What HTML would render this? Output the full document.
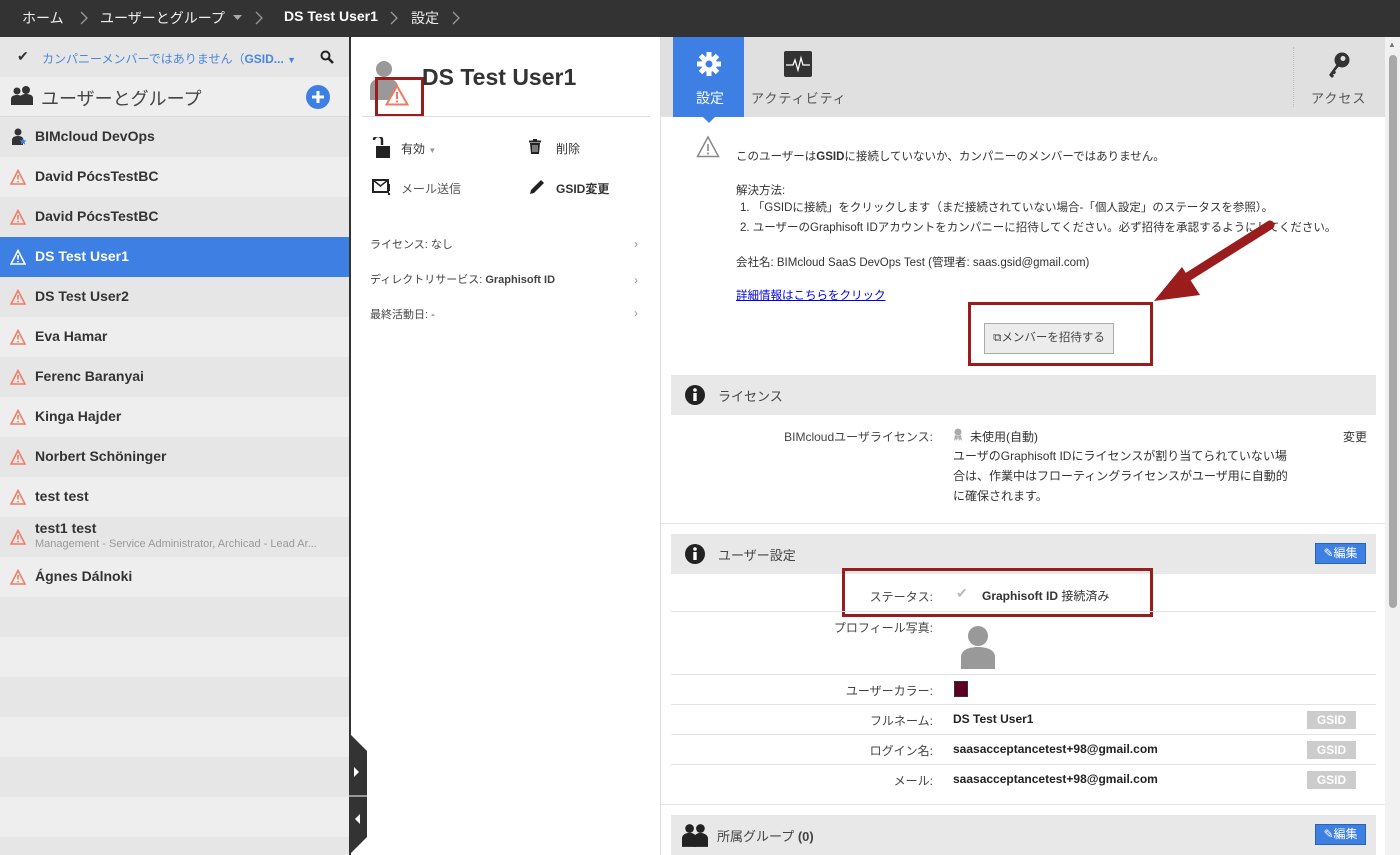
<!DOCTYPE html>
<html style="width:1400px;height:855px;overflow:hidden"><head><meta charset="utf-8"><style>
*{margin:0;padding:0;box-sizing:border-box}
body{width:1400px;height:855px;overflow:hidden;font-family:"Liberation Sans","Noto Sans CJK JP",sans-serif;color:#333;background:#fff;position:relative;font-size:13px}
.a{position:absolute}
.top{left:0;top:0;width:1400px;height:37px;background:#333;color:#eee;font-size:14px}
.top span{position:absolute;top:8px;white-space:nowrap}
.top svg{position:absolute;top:11px}
.row{position:absolute;left:0;width:349px;height:40px;font-weight:bold;font-size:14px;color:#333}
.row .t{position:absolute;left:35px;top:11px}
.row svg{position:absolute;left:10px;top:12px}
.lbl{position:absolute;font-size:12px;color:#444;text-align:right;width:260px;left:673px}
.val{position:absolute;font-size:12px;left:953px;color:#222}
.hr{position:absolute;left:671px;width:705px;height:1px;background:#e3e3e3}
.sec{position:absolute;left:671px;width:705px;height:40px;background:#e8e8e8}
.gs{position:absolute;left:1307px;width:49px;height:18px;background:#ccc;color:#fff;font-weight:bold;font-size:12px;text-align:center;line-height:18px}
.ed{position:absolute;left:1315px;width:51px;height:21px;background:#3d7fe3;border:1px solid #2a62b8;color:#fff;font-size:12px;line-height:19px;text-align:center}
.red{position:absolute;border:3px solid #9b1c1c}
</style></head><body>
<div class="a top">
<span style="left:22px">ホーム</span><svg style="left:80px" width="8" height="14"><path d="M1 1l6 6-6 6" fill="none" stroke="#999" stroke-width="1.3"/></svg>
<span style="left:100px">ユーザーとグループ</span><svg style="left:233px;top:15px" width="9" height="5"><path d="M0 0h9L4.5 5z" fill="#aaa"/></svg><svg style="left:255px" width="8" height="14"><path d="M1 1l6 6-6 6" fill="none" stroke="#999" stroke-width="1.3"/></svg>
<span style="left:284px;font-weight:bold;color:#fff">DS Test User1</span><svg style="left:390px" width="8" height="14"><path d="M1 1l6 6-6 6" fill="none" stroke="#999" stroke-width="1.3"/></svg>
<span style="left:411px">設定</span><svg style="left:452px" width="8" height="14"><path d="M1 1l6 6-6 6" fill="none" stroke="#999" stroke-width="1.3"/></svg>
</div>
<!-- left panel -->
<div class="a" style="left:0;top:37px;width:349px;height:40px;background:#e6e6e6"></div>
<div class="a" style="left:17px;top:48px;font-size:14px">✔</div>
<div class="a" style="left:42px;top:50px;font-size:12px;color:#4a86e0;white-space:nowrap">カンパニーメンバーではありません（<b>GSID...</b> <span style="font-size:9px">▼</span></div>
<svg class="a" style="left:320px;top:50px" width="14" height="14" viewBox="0 0 14 14"><circle cx="5.5" cy="5.5" r="4" fill="none" stroke="#222" stroke-width="2"/><path d="M8.5 8.5L13 13" stroke="#222" stroke-width="2.5"/></svg>
<div class="a" style="left:0;top:77px;width:349px;height:40px;background:#eee;border-bottom:1px solid #d8d8d8"></div>
<svg class="a" style="left:10px;top:86px" width="24" height="20" viewBox="0 0 24 20"><circle cx="7" cy="5" r="3.5" fill="#333"/><circle cx="16" cy="4" r="4" fill="#333"/><path d="M1 19v-6c0-3 3-4 6-4s6 1 6 4v6z" fill="#333"/><path d="M10 19v-7c0-3 3-4 6-4s7 1 7 4v7z" fill="#333"/></svg>
<div class="a" style="left:41px;top:85px;font-size:18px;color:#444">ユーザーとグループ</div>
<svg class="a" style="left:306px;top:85px" width="24" height="24"><circle cx="12" cy="12" r="12" fill="#3d7fe3"/><path d="M12 6v12M6 12h12" stroke="#fff" stroke-width="3"/></svg>
<div class="row" style="top:117px;background:#e6e6e6"><svg width="16" height="18" viewBox="0 0 16 18" style="left:11px;top:11px"><circle cx="7" cy="4" r="3.5" fill="#333"/><path d="M1 17v-5c0-3 3-4 6-4s5 1 5 3v6z" fill="#333"/><path d="M12 10l1 2.3 2.4.2-1.8 1.6.6 2.4-2.2-1.3-2.2 1.3.6-2.4-1.8-1.6 2.4-.2z" fill="#3d7fe3"/></svg><span class="t">BIMcloud DevOps</span></div>
<div class="row" style="top:157px;background:#eee"><svg width="16" height="16" viewBox="0 0 16 16"><path d="M8 1.5L15 15H1z" fill="none" stroke="#f07b65" stroke-width="1.6"/><path d="M8 6v4.5M8 12v1.4" stroke="#f07b65" stroke-width="1.6"/></svg><span class="t">David PócsTestBC</span></div>
<div class="row" style="top:197px;background:#e6e6e6"><svg width="16" height="16" viewBox="0 0 16 16"><path d="M8 1.5L15 15H1z" fill="none" stroke="#f07b65" stroke-width="1.6"/><path d="M8 6v4.5M8 12v1.4" stroke="#f07b65" stroke-width="1.6"/></svg><span class="t">David PócsTestBC</span></div>
<div class="row" style="top:237px;background:#3d7fe3;color:#fff"><svg width="16" height="16" viewBox="0 0 16 16"><path d="M8 1.5L15 15H1z" fill="none" stroke="#fff" stroke-width="1.6"/><path d="M8 6v4.5M8 12v1.4" stroke="#fff" stroke-width="1.6"/></svg><span class="t">DS Test User1</span></div>
<div class="row" style="top:277px;background:#e6e6e6"><svg width="16" height="16" viewBox="0 0 16 16"><path d="M8 1.5L15 15H1z" fill="none" stroke="#f07b65" stroke-width="1.6"/><path d="M8 6v4.5M8 12v1.4" stroke="#f07b65" stroke-width="1.6"/></svg><span class="t">DS Test User2</span></div>
<div class="row" style="top:317px;background:#eee"><svg width="16" height="16" viewBox="0 0 16 16"><path d="M8 1.5L15 15H1z" fill="none" stroke="#f07b65" stroke-width="1.6"/><path d="M8 6v4.5M8 12v1.4" stroke="#f07b65" stroke-width="1.6"/></svg><span class="t">Eva Hamar</span></div>
<div class="row" style="top:357px;background:#e6e6e6"><svg width="16" height="16" viewBox="0 0 16 16"><path d="M8 1.5L15 15H1z" fill="none" stroke="#f07b65" stroke-width="1.6"/><path d="M8 6v4.5M8 12v1.4" stroke="#f07b65" stroke-width="1.6"/></svg><span class="t">Ferenc Baranyai</span></div>
<div class="row" style="top:397px;background:#eee"><svg width="16" height="16" viewBox="0 0 16 16"><path d="M8 1.5L15 15H1z" fill="none" stroke="#f07b65" stroke-width="1.6"/><path d="M8 6v4.5M8 12v1.4" stroke="#f07b65" stroke-width="1.6"/></svg><span class="t">Kinga Hajder</span></div>
<div class="row" style="top:437px;background:#e6e6e6"><svg width="16" height="16" viewBox="0 0 16 16"><path d="M8 1.5L15 15H1z" fill="none" stroke="#f07b65" stroke-width="1.6"/><path d="M8 6v4.5M8 12v1.4" stroke="#f07b65" stroke-width="1.6"/></svg><span class="t">Norbert Schöninger</span></div>
<div class="row" style="top:477px;background:#eee"><svg width="16" height="16" viewBox="0 0 16 16"><path d="M8 1.5L15 15H1z" fill="none" stroke="#f07b65" stroke-width="1.6"/><path d="M8 6v4.5M8 12v1.4" stroke="#f07b65" stroke-width="1.6"/></svg><span class="t">test test</span></div>
<div class="row" style="top:517px;background:#e6e6e6"><svg width="16" height="16" viewBox="0 0 16 16"><path d="M8 1.5L15 15H1z" fill="none" stroke="#f07b65" stroke-width="1.6"/><path d="M8 6v4.5M8 12v1.4" stroke="#f07b65" stroke-width="1.6"/></svg><span class="t" style="top:3px">test1 test</span><span class="a" style="left:35px;top:21px;font-size:11px;font-weight:normal;color:#999;white-space:nowrap">Management - Service Administrator, Archicad - Lead Ar...</span></div>
<div class="row" style="top:557px;background:#eee"><svg width="16" height="16" viewBox="0 0 16 16"><path d="M8 1.5L15 15H1z" fill="none" stroke="#f07b65" stroke-width="1.6"/><path d="M8 6v4.5M8 12v1.4" stroke="#f07b65" stroke-width="1.6"/></svg><span class="t">Ágnes Dálnoki</span></div>
<div class="row" style="top:597px;background:#e6e6e6"></div>
<div class="row" style="top:637px;background:#eee"></div>
<div class="row" style="top:677px;background:#e6e6e6"></div>
<div class="row" style="top:717px;background:#eee"></div>
<div class="row" style="top:757px;background:#e6e6e6"></div>
<div class="row" style="top:797px;background:#eee"></div>
<div class="row" style="top:837px;height:18px;background:#e6e6e6"></div>
<div class="a" style="left:349px;top:37px;width:2px;height:818px;background:#333"></div>
<svg class="a" style="left:349px;top:733px" width="19" height="122" viewBox="0 0 19 122"><path d="M0 0L18 18V104L0 122z" fill="#333"/><path d="M0 63H18" stroke="#fff" stroke-width="1"/><path d="M5 34v10l5-5z" fill="#fff"/><path d="M11 81v10l-5-5z" fill="#fff"/></svg>
<!-- middle -->
<svg class="a" style="left:369px;top:60px" width="30" height="40" viewBox="0 0 30 40"><circle cx="15" cy="9" r="8" fill="#999"/><path d="M1 40V27c0-6 6-9 14-9s14 3 14 9v13z" fill="#999"/></svg>
<svg class="a" style="left:385px;top:84px" width="24" height="22" viewBox="0 0 24 22"><path d="M12 2L22.5 20.5H1.5z" fill="#fff" stroke="#f07b65" stroke-width="2"/><path d="M12 8v7M12 16.5v2" stroke="#f07b65" stroke-width="2"/></svg>
<div class="red" style="left:375px;top:77px;width:49px;height:40px;border-width:3px"></div>
<div class="a" style="left:422px;top:64px;font-size:23px;font-weight:bold;color:#333">DS Test User1</div>
<div class="a" style="left:362px;top:116px;width:288px;height:1px;background:#ddd"></div>
<svg class="a" style="left:372px;top:137px" width="20" height="22" viewBox="0 0 20 22"><path d="M2 3a4 4 0 018 0v5" fill="none" stroke="#222" stroke-width="2.4"/><rect x="4" y="9" width="14" height="12" fill="#222"/></svg>
<div class="a" style="left:401px;top:140px;font-size:12px">有効 <span style="font-size:8px;color:#999">▼</span></div>
<svg class="a" style="left:528px;top:139px" width="14" height="16" viewBox="0 0 14 16"><rect x="1" y="1.5" width="12" height="2" fill="#222"/><rect x="5" y="0" width="4" height="2" fill="#222"/><path d="M2 4h10l-1 11H3z" fill="#222"/><path d="M5 6v7M7 6v7M9 6v7" stroke="#fff" stroke-width=".8"/></svg>
<div class="a" style="left:556px;top:140px;font-size:12px">削除</div>
<svg class="a" style="left:372px;top:178px" width="20" height="18" viewBox="0 0 20 18"><rect x="1" y="2" width="15" height="12" fill="none" stroke="#222" stroke-width="2"/><path d="M1 2l7.5 6L16 2" fill="none" stroke="#222" stroke-width="1.5"/><path d="M17 6v7M17 15v2" stroke="#222" stroke-width="2"/></svg>
<div class="a" style="left:401px;top:180px;font-size:12px;color:#555">メール送信</div>
<svg class="a" style="left:528px;top:178px" width="18" height="18" viewBox="0 0 18 18"><path d="M2 16l1-4L13 2l3 3L6 15z" fill="#222"/></svg>
<div class="a" style="left:556px;top:180px;font-size:12px;font-weight:bold">GSID変更</div>
<div class="a" style="left:370px;top:236px;font-size:11px;color:#444">ライセンス: なし</div>
<div class="a" style="left:370px;top:271px;font-size:11px;color:#444">ディレクトリサービス: <b>Graphisoft ID</b></div>
<div class="a" style="left:370px;top:306px;font-size:11px;color:#444">最終活動日: -</div>
<div class="a" style="left:634px;top:237px;color:#999;font-size:12px">›</div>
<div class="a" style="left:634px;top:273px;color:#999;font-size:12px">›</div>
<div class="a" style="left:634px;top:306px;color:#999;font-size:12px">›</div>
<div class="a" style="left:660px;top:37px;width:1px;height:818px;background:#ddd"></div>
<!-- right -->
<div class="a" style="left:661px;top:37px;width:724px;height:80px;background:#e0e0e0"></div>
<div class="a" style="left:673px;top:37px;width:71px;height:80px;background:#3d7fe3"></div>
<svg class="a" style="left:703px;top:117px" width="12" height="6"><path d="M0 0h12L6 6z" fill="#3d7fe3"/></svg>
<svg class="a" style="left:696px;top:51px" width="26" height="26" viewBox="0 0 26 26"><g fill="#fff"><circle cx="13" cy="13" r="8"/><rect x="10.5" y="1" width="5" height="24"/><rect x="1" y="10.5" width="24" height="5"/><rect x="10.5" y="1" width="5" height="24" transform="rotate(45 13 13)"/><rect x="10.5" y="1" width="5" height="24" transform="rotate(-45 13 13)"/></g><circle cx="13" cy="13" r="3.5" fill="#3d7fe3"/></svg>
<div class="a" style="left:696px;top:88px;font-size:14px;color:#fff">設定</div>
<svg class="a" style="left:784px;top:51px" width="28" height="26" viewBox="0 0 28 26"><rect width="28" height="26" rx="2" fill="#333"/><path d="M2 14h7l2-5 3 10 3-12 2 7h7" fill="none" stroke="#fff" stroke-width="1.3"/></svg>
<div class="a" style="left:751px;top:88px;font-size:13px;color:#555;letter-spacing:1px">アクティビティ</div>
<div class="a" style="left:1293px;top:47px;width:1px;height:60px;border-left:1px dotted #bbb"></div>
<svg class="a" style="left:1326px;top:51px" width="26" height="28" viewBox="0 0 26 28"><circle cx="16" cy="9" r="7.5" fill="#333"/><circle cx="17" cy="7.5" r="2.5" fill="#e0e0e0"/><path d="M11 13L3 24l3 3 2-2-1-2 2 0 1-2-1-1 5-6z" fill="#333"/></svg>
<div class="a" style="left:1311px;top:88px;font-size:13px;color:#555;letter-spacing:1px">アクセス</div>
<svg class="a" style="left:696px;top:135px" width="24" height="24" viewBox="0 0 24 24"><path d="M12 2L22.5 21.5H1.5z" fill="none" stroke="#888" stroke-width="1.5"/><path d="M12 9v7M12 17.5v2" stroke="#888" stroke-width="1.6"/></svg>
<div class="a" style="left:736px;top:148px;font-size:11.5px;color:#333;white-space:nowrap">このユーザーは<b>GSID</b>に接続していないか、カンパニーのメンバーではありません。</div>
<div class="a" style="left:736px;top:182px;font-size:11.5px">解決方法:</div>
<div class="a" style="left:740px;top:199px;font-size:11.5px;white-space:nowrap">1. 「GSIDに接続」をクリックします（まだ接続されていない場合-「個人設定」のステータスを参照）。</div>
<div class="a" style="left:740px;top:219px;font-size:11.5px;white-space:nowrap">2. ユーザーのGraphisoft IDアカウントをカンパニーに招待してください。必ず招待を承認するようにしてください。</div>
<div class="a" style="left:736px;top:254px;font-size:11.5px;white-space:nowrap">会社名: BIMcloud SaaS DevOps Test (管理者: saas.gsid@gmail.com)</div>
<div class="a" style="left:736px;top:287px;font-size:11.5px;color:#00e;text-decoration:underline">詳細情報はこちらをクリック</div>
<div class="a" style="left:984px;top:323px;width:130px;height:31px;background:#ececec;border:1px solid #aaa;font-size:11.5px;line-height:29px;text-align:center;color:#444;white-space:nowrap">⧉メンバーを招待する</div>
<div class="red" style="left:968px;top:302px;width:185px;height:64px"></div>
<svg class="a" style="left:1140px;top:215px" width="140" height="95" viewBox="0 0 140 95"><path d="M130 10L38 68" stroke="#9b1c1c" stroke-width="9" stroke-linecap="round"/><path d="M14 86L60 80 42 52z" fill="#9b1c1c"/></svg>
<div class="sec" style="top:375px"></div>
<svg class="a" style="left:684px;top:384px" width="22" height="22"><circle cx="11" cy="11" r="10" fill="#222"/><rect x="9.3" y="9" width="3.4" height="8" fill="#fff"/><circle cx="11" cy="6" r="1.8" fill="#fff"/></svg>
<div class="a" style="left:718px;top:386px;font-size:13px;color:#444">ライセンス</div>
<div class="lbl" style="top:428px">BIMcloudユーザライセンス:</div>
<svg class="a" style="left:953px;top:428px" width="10" height="13" viewBox="0 0 10 13"><circle cx="5" cy="4" r="3.5" fill="#aaa"/><path d="M2 7l-1 6 2-2 1 2 1-5zM8 7l1 6-2-2-1 2-1-5z" fill="#aaa"/></svg>
<div class="a" style="left:970px;top:428px;font-size:12px">未使用(自動)</div>
<div class="a" style="left:1343px;top:428px;font-size:12px">変更</div>
<div class="a" style="left:953px;top:446px;font-size:12px;line-height:20px;width:342px;color:#333">ユーザのGraphisoft IDにライセンスが割り当てられていない場合は、作業中はフローティングライセンスがユーザ用に自動的に確保されます。</div>
<div class="a" style="left:661px;top:523px;width:724px;height:1px;background:#e8e8e8"></div>
<div class="sec" style="top:534px"></div>
<svg class="a" style="left:684px;top:543px" width="22" height="22"><circle cx="11" cy="11" r="10" fill="#222"/><rect x="9.3" y="9" width="3.4" height="8" fill="#fff"/><circle cx="11" cy="6" r="1.8" fill="#fff"/></svg>
<div class="a" style="left:718px;top:545px;font-size:13px;color:#444">ユーザー設定</div>
<div class="ed" style="top:543px">✎編集</div>
<div class="lbl" style="top:588px">ステータス:</div>
<div class="a" style="left:956px;top:585px;color:#bbb;font-size:14px">✔</div>
<div class="a" style="left:982px;top:587px;font-size:12px;font-weight:bold">Graphisoft ID <span style="font-weight:normal">接続済み</span></div>
<div class="red" style="left:842px;top:568px;width:311px;height:49px"></div>
<div class="hr" style="top:611px"></div>
<div class="lbl" style="top:619px">プロフィール写真:</div>
<svg class="a" style="left:960px;top:625px" width="36" height="44" viewBox="0 0 36 44"><circle cx="18" cy="11" r="10" fill="#999"/><path d="M1 44V32c0-7 8-10 17-10s17 3 17 10v12z" fill="#999"/></svg>
<div class="hr" style="top:674px"></div>
<div class="lbl" style="top:682px">ユーザーカラー:</div>
<div class="a" style="left:954px;top:681px;width:14px;height:16px;background:#5e0023;border:1px solid #333"></div>
<div class="hr" style="top:704px"></div>
<div class="lbl" style="top:712px">フルネーム:</div>
<div class="val" style="top:712px;font-weight:bold">DS Test User1</div>
<div class="gs" style="top:711px">GSID</div>
<div class="hr" style="top:734px"></div>
<div class="lbl" style="top:742px">ログイン名:</div>
<div class="val" style="top:742px;font-weight:bold">saasacceptancetest+98@gmail.com</div>
<div class="gs" style="top:741px">GSID</div>
<div class="hr" style="top:764px"></div>
<div class="lbl" style="top:772px">メール:</div>
<div class="val" style="top:772px;font-weight:bold">saasacceptancetest+98@gmail.com</div>
<div class="gs" style="top:771px">GSID</div>
<div class="a" style="left:661px;top:804px;width:724px;height:1px;background:#e8e8e8"></div>
<div class="sec" style="top:815px"></div>
<svg class="a" style="left:682px;top:823px" width="26" height="24" viewBox="0 0 24 22"><circle cx="7" cy="5" r="4" fill="#222"/><circle cx="17" cy="5" r="4" fill="#222"/><path d="M0 22v-8c0-3 3-5 7-5s6 2 6 5v8z" fill="#222"/><path d="M11 22v-8c0-3 3-5 6-5s7 2 7 5v8z" fill="#222"/></svg>
<div class="a" style="left:717px;top:826px;font-size:13px;color:#444">所属グループ <b>(0)</b></div>
<div class="ed" style="top:824px">✎編集</div>
<div class="a" style="left:1385px;top:37px;width:15px;height:818px;background:#f1f1f1"></div>
<div class="a" style="left:1389px;top:55px;width:8px;height:553px;background:#a8a8a8;border-radius:4px"></div>
<div class="a" style="left:1388px;top:40px;font-size:8px;color:#777">▲</div>
</body></html>
